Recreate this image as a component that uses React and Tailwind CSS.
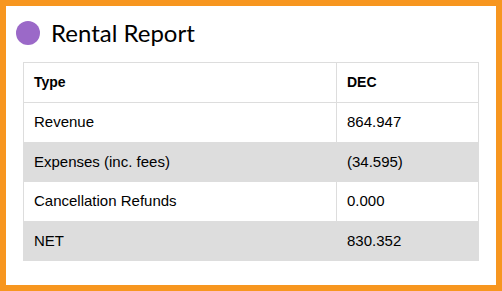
const rows = [
    { type: "Revenue", dec: "864.947", shade: false },
    { type: "Expenses (inc. fees)", dec: "(34.595)", shade: true },
    { type: "Cancellation Refunds", dec: "0.000", shade: false },
    { type: "NET", dec: "830.352", shade: true },
];

export default function App() {
    return (
        <div className="w-[502px] h-[291px] border-[6px] border-[#f7961f] bg-white">
            <div className="flex items-center gap-[11px] pl-[10px] pt-[11px] mb-[13px]">
                <span className="w-[24px] h-[24px] rounded-full bg-[#9b69c8]" />
                <h1 className="text-[24px] leading-[32px] text-black font-['Lato',sans-serif]">
                    Rental Report
                </h1>
            </div>
            <div className="px-[17px]">
                <table className="w-full border-collapse font-['Liberation_Sans',Arial,sans-serif] text-[15px] leading-[18.5px] text-black">
                    <thead>
                        <tr>
                            <th className="w-[313px] border border-[#dddddd] px-[10px] py-[10px] leading-[19px] text-left text-[14px] font-bold">
                                Type
                            </th>
                            <th className="border border-[#dddddd] px-[10px] py-[10px] leading-[19px] text-left text-[14px] font-bold">
                                DEC
                            </th>
                        </tr>
                    </thead>
                    <tbody>
                        {rows.map((r) => (
                            <tr key={r.type} className={r.shade ? "bg-[#dddddd]" : ""}>
                                <td className="border border-[#dddddd] px-[10px] py-[10px]">
                                    {r.type}
                                </td>
                                <td className="border border-[#dddddd] px-[10px] py-[10px]">
                                    {r.dec}
                                </td>
                            </tr>
                        ))}
                    </tbody>
                </table>
            </div>
        </div>
    );
}
